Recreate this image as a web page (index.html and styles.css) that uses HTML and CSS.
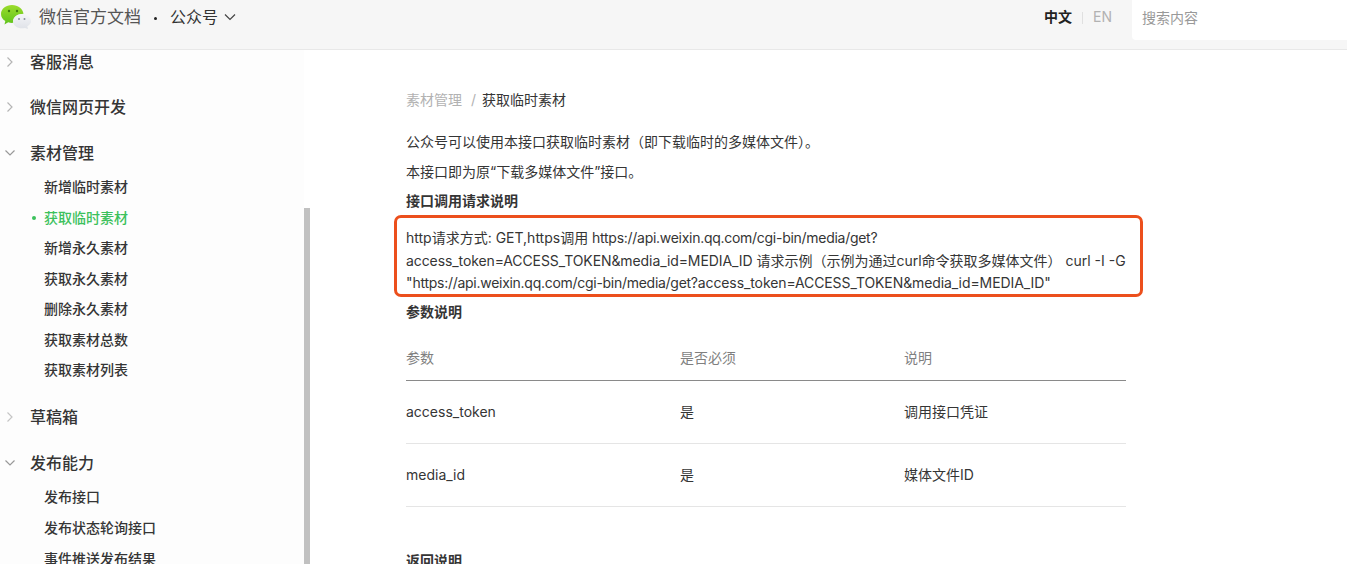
FILE: index.html
```html
<!DOCTYPE html>
<html lang="zh-CN">
<head>
<meta charset="utf-8">
<title>获取临时素材</title>
<link rel="stylesheet" href="styles.css">
</head>
<body>
<header class="topbar">
  <div class="brand">
    <svg class="logo" width="32" height="30" viewBox="0 0 32 30">
      <defs>
        <linearGradient id="leaf" x1="0" y1="0" x2="0" y2="1"><stop offset="0" stop-color="#9bdc2c"/><stop offset="1" stop-color="#5fc31c"/></linearGradient>
        <linearGradient id="cloud" x1="0" y1="0" x2="0" y2="1"><stop offset="0" stop-color="#f4f5f8"/><stop offset="1" stop-color="#dfe2e8"/></linearGradient>
      </defs>
      <path d="M12 5C6 5 1 8.800 1 14c0 3 1.700 5.400 4.300 7l-.8 3.500 3.700-2.200c1.200.4 2.500.6 3.800.6.500 0 1 0 1.500-.1C13 20 14 14.300 23.500 13.800 22.800 8.800 18 5 12 5z" fill="url(#leaf)"/>
      <circle cx="9" cy="11" r="1.200" fill="#3f7d0c"/>
      <circle cx="17" cy="11" r="1.200" fill="#3f7d0c"/>
      <path d="M22 14c-5 0-9 3.300-9 7.200s4 7.100 9 7.100c1 0 2-.1 3-.4l3 1-.7-2.600c2.300-1.300 3.700-3.100 3.700-5.100 0-3.900-4-7.200-9-7.200z" fill="url(#cloud)"/>
      <circle cx="19" cy="19" r="1" fill="#8a8f99"/>
      <circle cx="24.500" cy="19" r="1" fill="#8a8f99"/>
    </svg>
    <span class="brand-name">微信官方文档</span>
    <span class="brand-dot"></span>
    <span class="brand-sub">公众号</span>
    <svg class="brand-caret" width="12" height="8" viewBox="0 0 12 8"><path d="M1 1.500l5 5 5-5" fill="none" stroke="#444" stroke-width="1.200"/></svg>
  </div>
  <div class="tools">
    <span class="lang-on">中文</span>
    <span class="lang-sep"></span>
    <span class="lang-off">EN</span>
    <div class="search">搜索内容</div>
  </div>
</header>
<div class="page">
  <aside class="sidebar">
    <ul class="nav">
      <li class="sec sec-first"><svg class="chev" width="8" height="12" viewBox="0 0 8 12"><path d="M1.500 1.500L6 6l-4.500 4.500" fill="none" stroke="#b5b5b5" stroke-width="1.200"/></svg>客服消息</li>
      <li class="sec sec-second"><svg class="chev" width="8" height="12" viewBox="0 0 8 12"><path d="M1.500 1.500L6 6l-4.500 4.500" fill="none" stroke="#b5b5b5" stroke-width="1.200"/></svg>微信网页开发</li>
      <li class="sec sec-third"><svg class="chev open" width="12" height="8" viewBox="0 0 12 8"><path d="M1.500 1.500L6 6l4.500-4.500" fill="none" stroke="#999" stroke-width="1.200"/></svg>素材管理</li>
      <li class="sub sub-first">新增临时素材</li>
      <li class="sub active">获取临时素材</li>
      <li class="sub">新增永久素材</li>
      <li class="sub">获取永久素材</li>
      <li class="sub">删除永久素材</li>
      <li class="sub">获取素材总数</li>
      <li class="sub">获取素材列表</li>
      <li class="sec sec-after"><svg class="chev" width="8" height="12" viewBox="0 0 8 12"><path d="M1.500 1.500L6 6l-4.500 4.500" fill="none" stroke="#c5c5c5" stroke-width="1.200"/></svg>草稿箱</li>
      <li class="sec"><svg class="chev open" width="12" height="8" viewBox="0 0 12 8"><path d="M1.500 1.500L6 6l4.500-4.500" fill="none" stroke="#999" stroke-width="1.200"/></svg>发布能力</li>
      <li class="sub sub-first">发布接口</li>
      <li class="sub sub-wide">发布状态轮询接口</li>
      <li class="sub">事件推送发布结果</li>
    </ul>
  </aside>
  <div class="scrolltrack"><div class="scrollthumb"></div></div>
  <main class="content">
    <div class="crumbs"><span class="crumb-link">素材管理</span><span class="crumb-sep">/</span><span>获取临时素材</span></div>
    <p class="para first">公众号可以使用本接口获取临时素材（即下载临时的多媒体文件）。</p>
    <p class="para">本接口即为原“下载多媒体文件”接口。</p>
    <h4 class="heading">接口调用请求说明</h4>
    <div class="callout">http请求方式: GET,https调用 <span class="url">https://api.weixin.qq.com/cgi-bin/media/get?</span><br><span class="query">access_token=ACCESS_TOKEN&amp;media_id=MEDIA_ID</span> 请求示例（示例为通过curl命令获取多媒体文件） curl -I -G<br>"<span class="url">https://api.weixin.qq.com/cgi-bin/media/get?</span><span class="query">access_token=ACCESS_TOKEN&amp;media_id=MEDIA_ID</span>"</div>
    <h4 class="heading after-box">参数说明</h4>
    <table class="params">
      <thead><tr><th class="c1">参数</th><th class="c2">是否必须</th><th>说明</th></tr></thead>
      <tbody>
        <tr><td>access_token</td><td>是</td><td>调用接口凭证</td></tr>
        <tr><td>media_id</td><td>是</td><td>媒体文件ID</td></tr>
      </tbody>
    </table>
    <h4 class="heading after-table">返回说明</h4>
  </main>
</div>
</body>
</html>
```
FILE: styles.css
```css
* { box-sizing: border-box; }
html, body { margin: 0; height: 100%; overflow: hidden; }
body {
  font-family: Inter, "Noto Sans CJK SC", sans-serif;
  font-size: 14px;
  color: #353535;
  background: #fff;
}
.topbar {
  height: 50px;
  background: #f6f6f6;
  border-bottom: 1px solid #e8e8e8;
  display: flex;
  justify-content: space-between;
}
.brand { display: flex; align-items: flex-start; }
.logo { flex: none; }
.brand-name { margin-left: 7px; margin-top: 5px; font-size: 17px; line-height: 24px; color: #555; }
.brand-dot { width: 3px; height: 3px; border-radius: 50%; background: #222; margin: 17px 0 0 13px; }
.brand-sub { margin-left: 13px; margin-top: 5px; font-size: 16px; line-height: 24px; color: #333; }
.brand-caret { margin: 13px 0 0 6px; }
.tools { display: flex; align-items: flex-start; }
.lang-on { margin-top: 9px; font-size: 14px; line-height: 16px; font-weight: 700; color: #222; }
.lang-sep { width: 1px; height: 12px; background: #e0e0e0; margin: 12px 10px 0; }
.lang-off { margin-top: 9px; font-size: 14px; line-height: 16px; color: #b2b2b2; }
.search {
  width: 215px;
  height: 40px;
  margin-left: 20px;
  padding-left: 10px;
  background: #fff;
  border-bottom-left-radius: 4px;
  line-height: 36px;
  font-size: 14px;
  color: #999;
}
.page { display: flex; height: 514px; overflow: hidden; }
.sidebar { width: 304px; flex: none; background: #fdfdfd; overflow: hidden; }
.nav { list-style: none; margin: 0; padding: 0; }
.sec {
  position: relative;
  padding-left: 30px;
  font-size: 16px;
  line-height: 24px;
  color: #353535;
  margin-top: 22px;
  font-weight: 500;
}
.sec-first { margin-top: 0; }
.sec-second { margin-top: 21px; }
.sec-after { margin-top: 25px; }
.chev { position: absolute; left: 6px; top: 6px; }
.chev.open { left: 4px; top: 8px; }
.sub {
  position: relative;
  padding-left: 44px;
  font-size: 14px;
  line-height: 20px;
  margin-top: 10.500px;
  color: #353535;
  font-weight: 500;
}
.sub-first { margin-top: 12px; }
.sub-wide { margin-top: 11px; }
.active { color: #3cc15c; }
.active::before {
  content: "";
  position: absolute;
  left: 32px;
  top: 8px;
  width: 4px;
  height: 4px;
  border-radius: 50%;
  background: #3cc15c;
}
.scrolltrack { width: 6px; flex: none; background: #fff; padding-top: 158px; }
.scrollthumb { height: 400px; background: #c1c1c1; }
.content { width: 720px; margin-left: 96px; flex: none; font-size: 14px; }
.crumbs { margin-top: 40px; line-height: 20px; color: #353535; font-size: 14px; }
.crumb-link { color: #b2b2b2; }
.crumb-sep { color: #b2b2b2; margin: 0 6px 0 9px; }
.para { margin: 0; line-height: 22px; }
.para.first { margin-top: 21px; }
.para + .para { margin-top: 8px; }
.heading { margin: 0; font-size: 14px; line-height: 22px; font-weight: 600; color: #353535; }
.para + .heading { margin-top: 7px; }
.callout {
  margin: 3px -17px 0 -12px;
  padding: 9px 8px 3px 9px;
  border: 3px solid #ec4f1c;
  border-radius: 7px;
  line-height: 22.500px;
  font-size: 14px;
  height: 82px;
  white-space: nowrap;
}
.url { letter-spacing: -0.28px; }
.query { letter-spacing: -0.09px; }
.heading.after-box { margin-top: 4px; }
.params { width: 720px; border-collapse: collapse; margin-top: 10px; table-layout: fixed; font-size: 14px; }
.params th { text-align: left; font-weight: 400; color: #7f7f7f; height: 47px; border-bottom: 1px solid #8a8a8a; padding: 2px 0 0; }
.params td { height: 63px; border-bottom: 1px solid #e5e5e5; padding: 0; }
.params td + td { padding-bottom: 2px; }
.c1 { width: 274px; }
.c2 { width: 224px; }
.heading.after-table { margin-top: 43px; }
```
